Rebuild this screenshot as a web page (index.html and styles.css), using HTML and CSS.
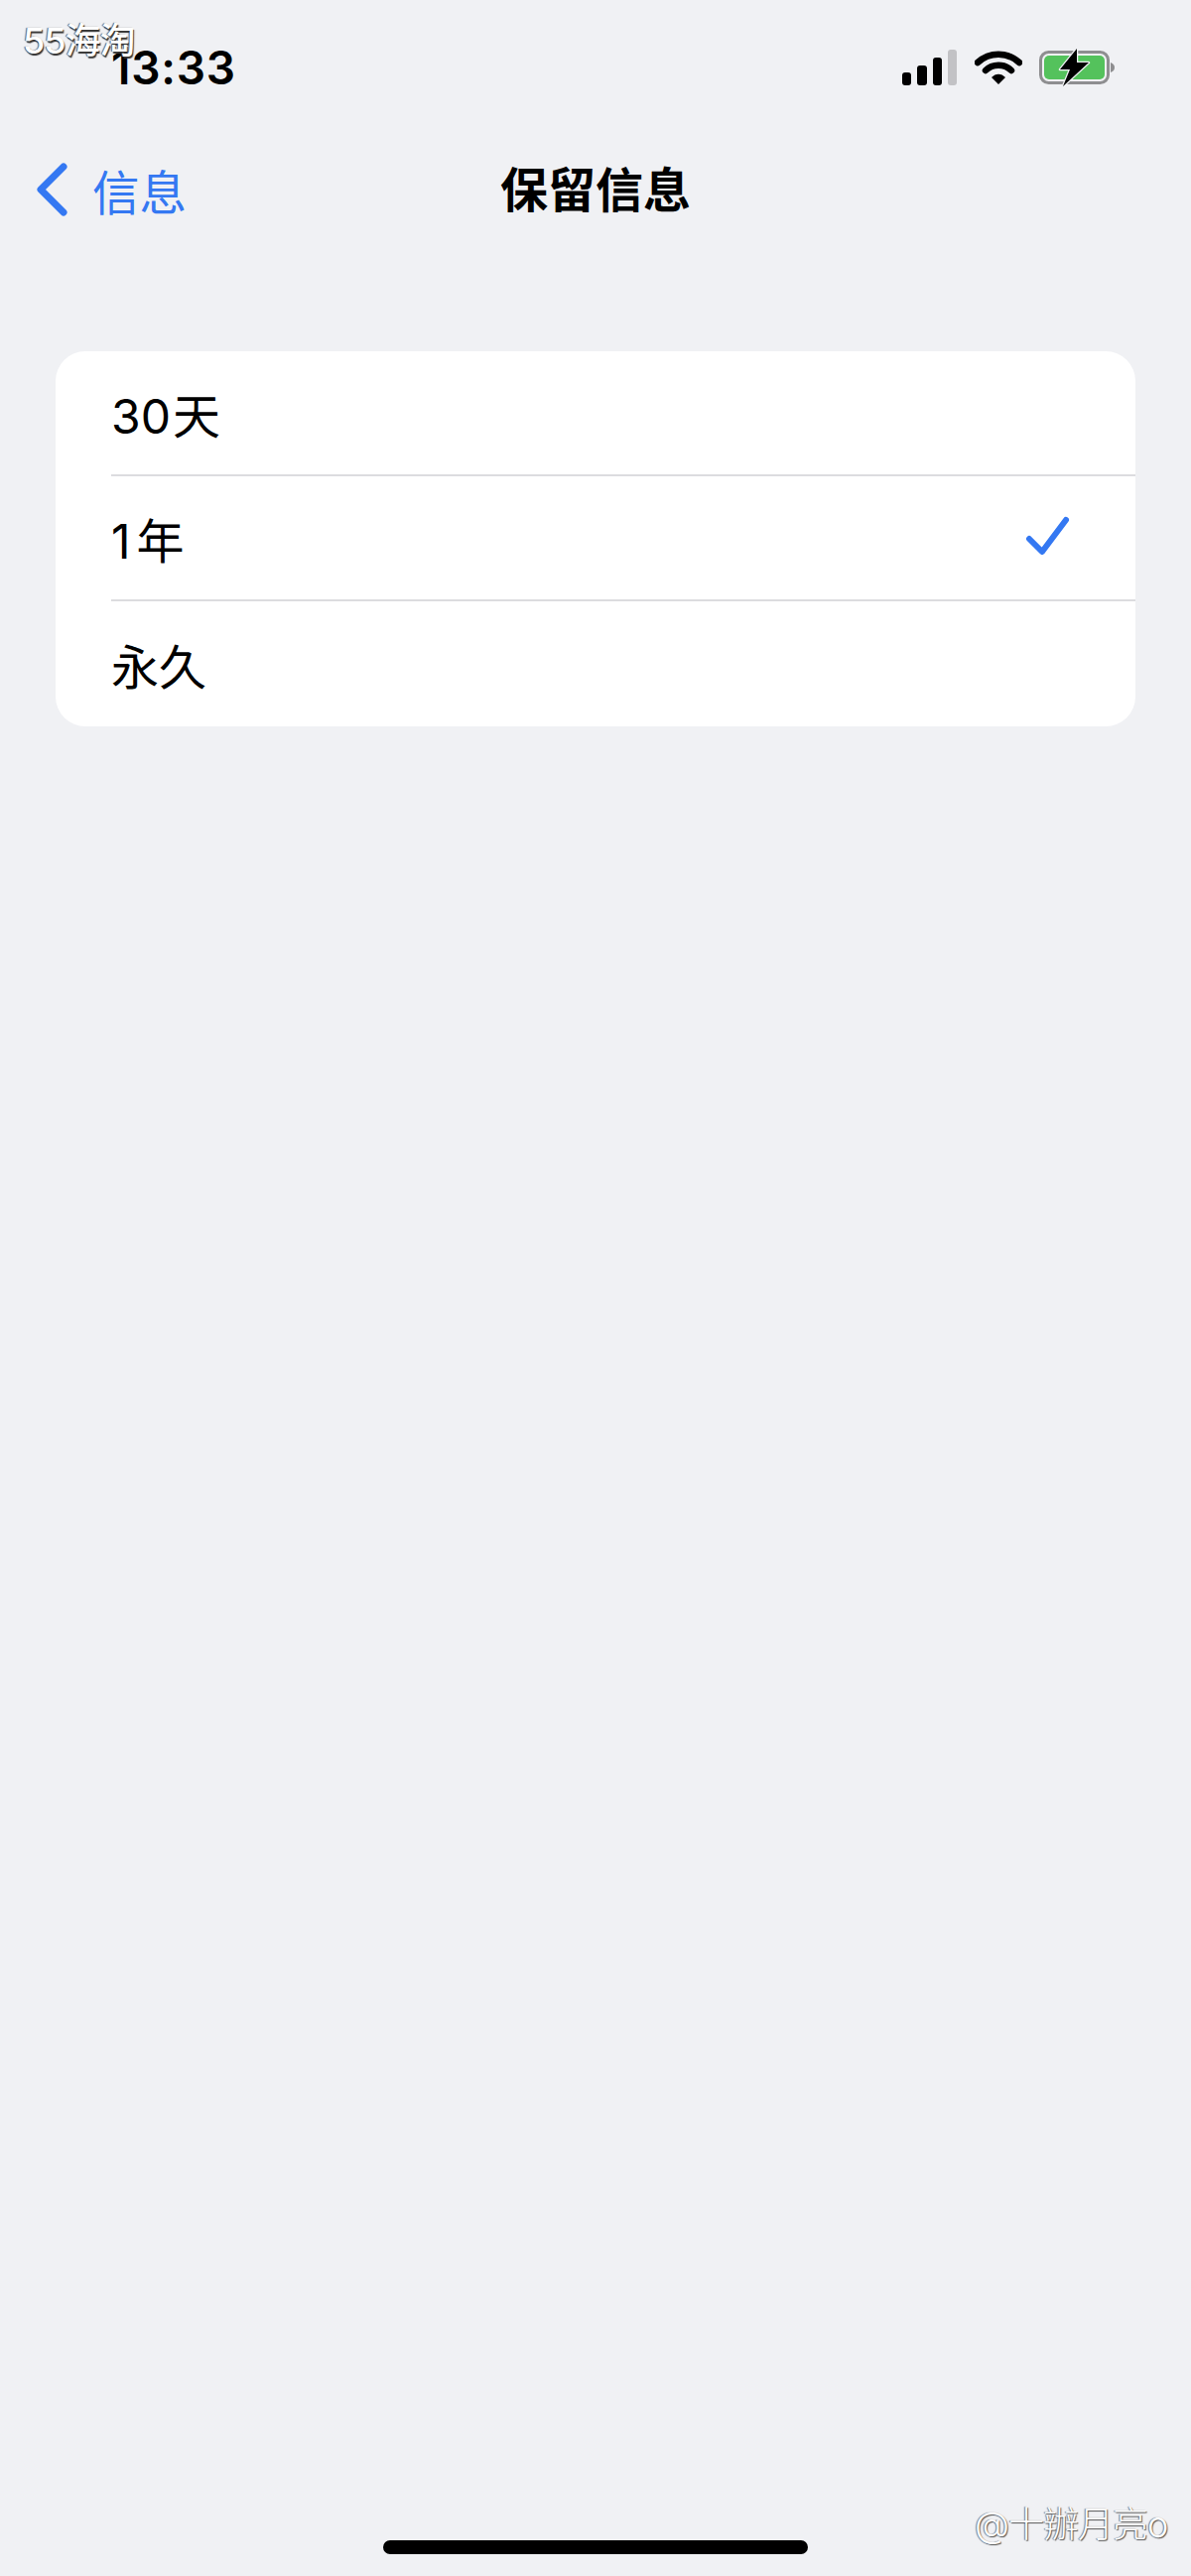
FILE: index.html
```html
<!DOCTYPE html>
<html lang="zh-CN">
<head>
    <meta charset="UTF-8">
    <meta name="viewport" content="width=device-width, initial-scale=1.0">
    <title>保留信息</title>
    <link rel="stylesheet" href="styles.css">
</head>
<body>
    <div id="screen">
        <div class="status">
            <span class="time">13:33</span>
            <div class="status-icons">
                <svg class="signal" width="56" height="36" viewBox="0 0 56 36">
                    <rect x="0" y="23" width="9" height="13" rx="3" fill="#000"/>
                    <rect x="15" y="16" width="10" height="20" rx="3" fill="#000"/>
                    <rect x="31" y="8" width="9" height="28" rx="3" fill="#000"/>
                    <rect x="46" y="0" width="9" height="36" rx="3" fill="#c2c2c5"/>
                </svg>
                <svg class="wifi" width="48" height="36" viewBox="0 0 48 36">
                    <path d="M3 13 C15 2 33 2 45 13" fill="none" stroke="#000" stroke-width="6.5" stroke-linecap="round"/>
                    <path d="M11 21 C18 14 30 14 37 21" fill="none" stroke="#000" stroke-width="6.5" stroke-linecap="round"/>
                    <path d="M17 28 C21 23.500 27 23.500 31 28 L24 35 Z" fill="#000"/>
                </svg>
                <svg class="battery" width="78" height="38" viewBox="0 0 78 38">
                    <rect x="1.500" y="3.500" width="68" height="31" rx="8" fill="none" stroke="#8e8e90" stroke-width="3"/>
                    <rect x="5" y="7" width="61" height="24" rx="5" fill="#54c25c"/>
                    <path d="M72 14 C75 15 76 17 76 19 C76 21 75 23 72 24 Z" fill="#8e8e90"/>
                    <path d="M38 0 L21 21 L31 21 L24 38 L50 14 L38 14 Z" fill="#000" stroke="#f0f1f4" stroke-width="2.500" stroke-linejoin="round" paint-order="stroke"/>
                </svg>
            </div>
        </div>

        <div class="nav">
            <div class="back">
                <svg width="32" height="54" viewBox="0 0 32 54">
                    <path d="M28 4 L5 27 L28 50" fill="none" stroke="#3478f2" stroke-width="7" stroke-linecap="round" stroke-linejoin="round"/>
                </svg>
                <span>信息</span>
            </div>
            <h1>保留信息</h1>
        </div>

        <ul class="options">
            <li><span>30<i class="gap"></i>天</span></li>
            <li>
                <span class="one-year">1年</span>
                <svg class="check" width="46" height="46" viewBox="0 0 46 46">
                    <path d="M4 24 L17 37 L41 5" fill="none" stroke="#3478f2" stroke-width="6" stroke-linecap="round" stroke-linejoin="round"/>
                </svg>
            </li>
            <li><span>永久</span></li>
        </ul>

        <div class="home-bar"></div>

        <!-- watermarks on top of the screenshot -->
        <div class="mark-top">55海淘</div>
        <div class="mark-bottom">@十辦月亮o</div>
    </div>
</body>
</html>
```

FILE: styles.css
```css
* {
    box-sizing: border-box;
}
body {
    margin: 0;
    background: #f0f1f4;
    font-family: Inter, "Noto Sans CJK SC", sans-serif;
    color: #000;
}
#screen {
    position: relative;
    display: flex;
    flex-direction: column;
    width: 1200px;
    height: 2596px;
    overflow: hidden;
}
.status {
    display: flex;
    justify-content: space-between;
    align-items: center;
    height: 70px;
    margin-top: 33px;
    padding: 0 75px 0 112px;
}
.time {
    font-size: 46px;
    font-weight: 600;
    letter-spacing: 0.8px;
}
.status-icons {
    display: flex;
    align-items: center;
    gap: 17px;
}
.nav {
    position: relative;
    display: flex;
    justify-content: center;
    align-items: center;
    height: 60px;
    margin-top: 58px;
}
.nav h1 {
    margin: 2px 0 0;
    font-size: 48px;
    font-weight: 700;
    line-height: 60px;
}
.back {
    position: absolute;
    left: 36px;
    top: 0;
    display: flex;
    align-items: center;
    gap: 25px;
    height: 60px;
    font-size: 47.500px;
    color: #3478f2;
}
.options {
    list-style: none;
    margin: 133px 56px 0;
    padding: 0;
    background: #fff;
    border-radius: 30px;
    overflow: hidden;
}
.options li {
    display: flex;
    justify-content: space-between;
    align-items: center;
    height: 126px;
    margin-left: 56px;
    padding-right: 65px;
    border-bottom: 2px solid #dcdcdf;
    font-size: 48px;
}
.options li:last-child {
    border-bottom: 0;
}
.gap {
    display: inline-block;
    width: 2px;
}
.one-year {
    letter-spacing: 6px;
}
.home-bar {
    width: 428px;
    height: 14px;
    margin: auto auto 22px;
    background: #000;
    border-radius: 7px;
}
.mark-top {
    position: absolute;
    left: 23px;
    top: 20px;
    font-size: 36px;
    font-weight: 500;
    line-height: 42px;
    color: #fff;
    letter-spacing: -1px;
    text-shadow: 1px 2px 1px #333, -1px 0 1px #555;
}
.mark-bottom {
    position: absolute;
    left: 982px;
    top: 2520px;
    font-size: 36px;
    line-height: 48px;
    font-weight: 300;
    letter-spacing: -1px;
    color: #fff;
    text-shadow: 1px 1px 1px #555, -1px 0 1px #777;
}
```
